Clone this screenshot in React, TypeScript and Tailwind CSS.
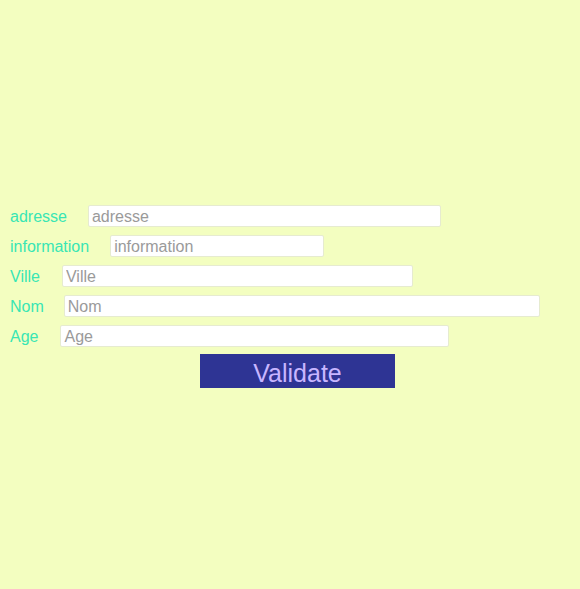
import React from "react";

const fields = [
	{ label: "adresse", width: "w-[353px]", gap: "mr-[21px]" },
	{ label: "information", width: "w-[214px]", gap: "mr-[21px]" },
	{ label: "Ville", width: "w-[351px]", gap: "mr-[22px]" },
	{ label: "Nom", width: "w-[476px]", gap: "mr-[20px]" },
	{ label: "Age", width: "w-[389px]", gap: "mr-[22px]" },
];

export default function App() {
	return (
		<div className="w-[580px] h-[589px] bg-[#f3fec0] font-['Liberation_Sans',Arial,sans-serif]">
			<form className="flex flex-col pt-[201px] px-[10px]">
				{fields.map((f) => (
					<div key={f.label} className="flex items-center h-[30px]">
						<label className={`text-[16px] text-[#38e6b4] pt-[2px] ${f.gap}`} htmlFor={f.label}>
							{f.label}
						</label>
						<input
							id={f.label}
							type="text"
							placeholder={f.label}
							className={`${f.width} h-[22px] bg-white border border-[#e6ebd0] rounded-[2px] px-[3px] pt-[1px] text-[16px] placeholder:text-[#9a9a9a] outline-none`}
						/>
					</div>
				))}
				<div className="flex justify-center">
					<button
						type="button"
						className="ml-[15px] mt-[3px] w-[195px] h-[34px] bg-[#2e3494] text-[#c8b6ff] text-[25px] leading-none pt-[4px]"
					>
						Validate
					</button>
				</div>
			</form>
		</div>
	);
}
